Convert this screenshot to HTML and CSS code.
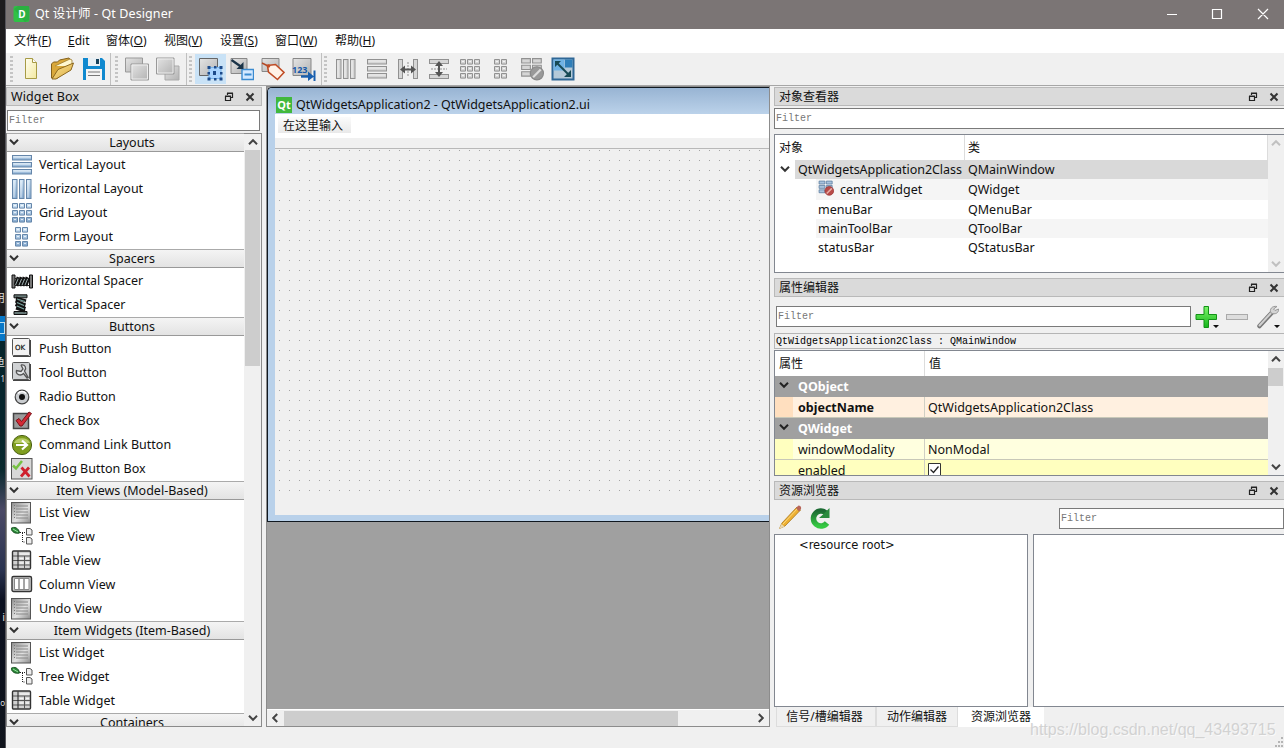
FILE: index.html
```html
<!DOCTYPE html>
<html lang="zh-CN">
<head>
<meta charset="utf-8">
<title>Qt 设计师 - Qt Designer</title>
<link rel="stylesheet" href="styles.css">
</head>
<body>
<svg class="defs" width="0" height="0">
  <defs>
    <linearGradient id="blue" x1="0" y1="0" x2="0" y2="1"><stop offset="0" stop-color="#d3e6f6"/><stop offset="1" stop-color="#87abd0"/></linearGradient>
    <linearGradient id="grey" x1="0" y1="0" x2="1" y2="1"><stop offset="0" stop-color="#e4e4e4"/><stop offset="1" stop-color="#b2b2b2"/></linearGradient>
    <linearGradient id="paper" x1="0" y1="0" x2="1" y2="1"><stop offset="0" stop-color="#fffef0"/><stop offset="1" stop-color="#f3e9a0"/></linearGradient>
    <linearGradient id="gold" x1="0" y1="0" x2="1" y2="1"><stop offset="0" stop-color="#fbe79a"/><stop offset="1" stop-color="#dba83c"/></linearGradient>
    <linearGradient id="green" x1="0" y1="0" x2="0" y2="1"><stop offset="0" stop-color="#7df56b"/><stop offset="1" stop-color="#15b51a"/></linearGradient>
    <linearGradient id="green2" x1="0" y1="0" x2="0" y2="1"><stop offset="0" stop-color="#1c6b33"/><stop offset="1" stop-color="#36c943"/></linearGradient>
    <linearGradient id="lines" x1="0" y1="0" x2="1" y2="1"><stop offset="0" stop-color="#8b8b8b"/><stop offset=".55" stop-color="#e2e2e2"/><stop offset="1" stop-color="#8b8b8b"/></linearGradient>
    <symbol id="chev" viewBox="0 0 10 8"><path d="M1 1.8 5 5.8 9 1.8" fill="none" stroke="currentColor" stroke-width="2"/></symbol>
    <symbol id="float" viewBox="0 0 10 10"><path d="M3.5 3V1.5h5v4H7M3 1h6M1.5 4.5h5v4h-5zM1 4.2h6" fill="none" stroke="#222" stroke-width="1.2"/></symbol>
    <symbol id="close" viewBox="0 0 10 10"><path d="M1.5 1.5l7 7m0-7l-7 7" stroke="#333" stroke-width="2" fill="none"/></symbol>

    <symbol id="rows" viewBox="0 0 22 22"><rect x="1.5" y="1.5" width="19" height="4.5"/><rect x="1.5" y="8.5" width="19" height="4.5"/><rect x="1.5" y="15.5" width="19" height="4.5"/><path class="shine" d="M2.500 3h17M2.500 10h17M2.500 17h17"/></symbol>
    <symbol id="cols" viewBox="0 0 22 22"><rect x="1.5" y="1.5" width="4.5" height="19"/><rect x="8.5" y="1.5" width="4.5" height="19"/><rect x="15.5" y="1.5" width="4.5" height="19"/><path class="shine" d="M3 2.500v17M10 2.500v17M17 2.500v17"/></symbol>
    <symbol id="gridi" viewBox="0 0 22 22"><path d="M1.500 1.500h5v4.600h-5zM8.500 1.500h5v4.600h-5zM15.500 1.500h5v4.600h-5zM1.500 8.500h5v4.600h-5zM8.500 8.500h5v4.600h-5zM15.500 8.500h5v4.600h-5zM1.500 15.500h5v4.600h-5zM8.500 15.500h5v4.600h-5zM15.500 15.500h5v4.600h-5z"/><path class="shine" d="M3 3.500h2M10 3.500h2M17 3.500h2M3 10.500h2M10 10.500h2M17 10.500h2M3 17.500h2M10 17.500h2M17 17.500h2"/></symbol>
    <symbol id="form" viewBox="0 0 22 22"><path d="M4.500 1.500h5v4.600h-5zM11.500 1.500h5v4.600h-5zM4.500 8.500h5v4.600h-5zM11.500 8.500h5v4.600h-5zM4.500 15.500h5v4.600h-5zM11.500 15.500h5v4.600h-5z"/><path class="shine" d="M6 3.500h2M13 3.500h2M6 10.500h2M13 10.500h2M6 17.500h2M13 17.500h2"/></symbol>

    <symbol id="list" viewBox="0 0 22 22"><rect x=".5" y=".5" width="19" height="20.500" fill="url(#lines)" stroke="#555"/><path d="M5 4h12M5 7h12M5 10h12M5 13h12M5 16h12" stroke="#888"/><path d="M3.500 3v15" stroke="#777" stroke-dasharray="1 2"/></symbol>
    <symbol id="tree" viewBox="0 0 22 22"><path d="M0 2.500C3 0 8 2 8.500 7 4 8 1 6 0 2.500z" fill="#2c8a3a" stroke="#174f20"/><path d="M2 3l5 3" stroke="#9be0a0"/><path d="M9 6.500h5M11.500 7v9h3" fill="none" stroke="#222" stroke-dasharray="1 1"/><path d="M15.500 2.500h3.500l2 1.500v5h-5.500zM15.500 11.500h3.500l2 1.500v5h-5.500z" fill="#eee" stroke="#555"/></symbol>
    <symbol id="table" viewBox="0 0 22 22"><rect x="1.500" y="1" width="18" height="18" rx="1" fill="#d0d0d0" stroke="#333" stroke-width="1.400"/><path d="M2 6h17M2 10.500h17M2 15h17M13.500 6v13" stroke="#555"/><path d="M7 1.500v17" stroke="#222"/><path d="M8.500 4h10M8.500 8.500h4M15 8.500h3M8.500 13h4M15 13h3" stroke="#f4f4f4" stroke-width="1.500"/></symbol>
    <symbol id="columns" viewBox="0 0 22 22"><rect x="1" y="2.500" width="19.500" height="15" rx="1.500" fill="#ccc" stroke="#333" stroke-width="1.400"/><path d="M3.500 4.500h4.500v11H3.500zM8 4.500h5v11H8zM13 4.500h5v11h-5z" fill="#fff" stroke="#888"/></symbol>
    <symbol id="hsp" viewBox="0 0 22 22"><path d="M1 5h3v13H1zM18.500 5h3v13h-3z" fill="#777" stroke="#111"/><path d="M4 15 7 7M6 16l4-9M9 16l4-9M12 16l4-9M15 16l3-8" stroke="#111" stroke-width="2.600"/><path d="M4.500 15 7.500 8M8 15l3-7M11 15l3-7M14 15l3-7" stroke="#9aa"/><path d="M4 8.500h14M4 15.500h14" stroke="#222" stroke-dasharray="2 1"/></symbol>
    <symbol id="vsp" viewBox="0 0 22 22"><path d="M3 .8h13v3H3zM3 17.500h13v3H3z" fill="#687a78" stroke="#111"/><path d="M5 4l10 3M4.500 7l10 4M4.500 10.500l10 4M5 14l9 3" stroke="#111" stroke-width="3"/><path d="M6 5l8 2.500M6 8.500l7 3M6 12l7 3" stroke="#7aa5a0" stroke-width="1.200"/></symbol>
    <symbol id="nolay" viewBox="0 0 22 22"><path d="M1.500 1.500h8v4h-8zM11.500 1.500h8v4h-8zM1.500 7.500h8v4h-8zM11.500 7.500h8v4h-8zM1.500 13.500h8v4h-8z"/><circle class="ban" cx="15.500" cy="15" r="6"/><path class="slash" d="M12 18.500l7-7" stroke-width="2"/></symbol>
  </defs>
</svg>

<div class="desktop">
  <span class="d1">用</span><span class="d2"></span><span class="d3">鱼</span><span class="d4">1</span><span class="d5">i</span><span class="d6">o</span>
</div>
<div class="window">
  <header class="titlebar">
    <svg width="18" height="16" viewBox="0 0 18 16"><rect x=".5" width="16" height="16" rx="2" fill="#2fc146"/><path d="M1 3l4-3h11v14l-4 2" fill="#28a03b" opacity=".5"/></svg><b class="dmark">D</b>
    <span class="title">Qt 设计师 - Qt Designer</span>
    <svg class="winbtns" width="110" height="14" viewBox="0 0 110 14" fill="none" stroke="#fff" stroke-width="1.200"><path d="M0 7.500h10M45.500 2.500h9v9h-9zM91 2l10 10m0-10l-10 10"/></svg>
  </header>

  <nav class="menubar">
    <span class="m1">文件(<u>F</u>)</span><span class="m2"><u>E</u>dit</span><span class="m3">窗体(<u>O</u>)</span><span class="m4">视图(<u>V</u>)</span><span class="m5">设置(<u>S</u>)</span><span class="m6">窗口(<u>W</u>)</span><span class="m7">帮助(<u>H</u>)</span>
  </nav>

  <div class="toolbar">
    <div class="group g1"><i class="grip"></i>
      <span class="tool"><svg viewBox="0 0 24 24"><path d="M5.500 1.500h7l4 4v16h-11z" fill="url(#paper)" stroke="#a79b45"/><path d="M12.500 1.500v4h4" fill="#fff" stroke="#a79b45"/></svg></span>
      <span class="tool"><svg viewBox="0 0 24 24"><path d="M.5 21V7l2-2h4l2-2L18 1l2 3v4L7 21z" fill="#d9a83b" stroke="#84611d"/><path d="M4 9L19 2l2 1v6" fill="#fff8d0" stroke="#9a7a30" stroke-width=".8"/><path d="M1 22L7 12.500 22.500 6 20 13 5 22z" fill="url(#gold)" stroke="#8c6820"/></svg></span>
      <span class="tool"><svg viewBox="0 0 24 24"><path d="M1 1h19l3 3v19H1z" fill="#1089cf"/><path d="M6 1h12v8H6z" fill="#e8eff4"/><path d="M14 2h3v5h-3z" fill="#17425c"/><path d="M4 12h16v11H4z" fill="#f4f4f4"/><path d="M6 15h12M6 18.500h12" stroke="#777"/></svg></span>
    </div>
    <div class="group g2"><i class="grip"></i>
      <span class="tool"><svg viewBox="0 0 24 24" fill="url(#grey)"><path d="M.5 1h17v14H.5z" stroke="#999"/><path d="M6 7h17.500v16H6z" stroke="#999"/><path d="M7 8h15.500v14H7z" fill="none" stroke="#eee"/></svg></span>
      <span class="tool"><svg viewBox="0 0 24 24" fill="url(#grey)"><path d="M9 9h14v14H9z" stroke="#aaa"/><path d="M.5 1h17.500v16H.5z" stroke="#999"/><path d="M1.500 2h15.500v14H1.500z" fill="none" stroke="#eee"/></svg></span>
    </div>
    <div class="group g3"><i class="grip"></i>
      <span class="tool active"><svg viewBox="0 0 24 24"><path d="M.5 1.500h18v17H.5z" fill="url(#grey)" stroke="#666"/><path d="M10 10.500h12v11H10z" fill="#a9d4ff" stroke="#7ab4ea"/><path d="M8.500 9h3v3h-3zM15 9h2.500v2.500H15zM20.500 9h3v3h-3zM8.500 15H11v2.500H8.500zM21 15h2.500v2.500H21zM8.500 20.500h3v3h-3zM15 21h2.500v2.500H15zM20.500 20.500h3v3h-3zM14 14h3v4h-3z" fill="#1d4b8b"/></svg></span>
      <span class="tool"><svg viewBox="0 0 24 24"><path d="M1 1.500h16v15H1z" fill="url(#grey)" stroke="#888"/><path d="M12 12.500h11.500v10H12z" fill="#d4e9ff" stroke="#3b8bd0" stroke-width="1.400"/><path d="M14.500 17.500h7" stroke="#3b8bd0" stroke-width="2"/><path d="M1.500 3l10 7" stroke="#1b3448" stroke-width="2.200"/><path d="M13.500 12V5l-7 7z" fill="#1b3448"/></svg></span>
      <span class="tool"><svg viewBox="0 0 24 24"><path d="M1 1.500h17v13H1z" fill="url(#grey)" stroke="#888"/><path d="M1 6l6 3" stroke="#b34925" stroke-width="1.500"/><path d="M6.500 8.500l8-1 8.500 8-6.500 7-9-7.500z" fill="#fff2e7" stroke="#c04c25" stroke-width="1.600"/><circle cx="7.500" cy="9" r="1.800" fill="#c04c25"/></svg></span>
      <span class="tool"><svg viewBox="0 0 24 24"><path d="M1 1.500h18v17H1z" fill="url(#grey)" stroke="#888"/><path d="M9 19.500h10" stroke="#195fae" stroke-width="2.400"/><path d="M16 14.500l6 5-6 4.500zM21.500 13.500H23.500V24h-2z" fill="#195fae"/><text x="0" y="15.500" class="num">123</text></svg></span>
    </div>
    <div class="group g4 mono"><i class="grip"></i>
      <span class="tool"><svg><use href="#cols"/></svg></span>
      <span class="tool"><svg><use href="#rows"/></svg></span>
      <span class="tool"><svg viewBox="0 0 22 22"><rect x="1.500" y="1.500" width="4" height="19"/><rect x="16.500" y="1.500" width="4" height="19"/><path d="M11 4v15" stroke-dasharray="2 1"/><path d="M3 11.500l5-4v3h6v-3l5 4-5 4v-3H8v3z" fill="#555" stroke="none"/></svg></span>
      <span class="tool"><svg viewBox="0 0 22 22"><rect x="1.500" y="1.500" width="19" height="4"/><rect x="1.500" y="16.500" width="19" height="4"/><path d="M3 11h16" stroke-dasharray="2 1"/><path d="M11 3l4 5h-3v6h3l-4 5-4-5h3V8H7z" fill="#555" stroke="none"/></svg></span>
      <span class="tool"><svg><use href="#gridi"/></svg></span>
      <span class="tool"><svg><use href="#form"/></svg></span>
      <span class="tool"><svg class="big"><use href="#nolay"/></svg></span>
      <span class="tool"><svg class="big" viewBox="0 0 24 24"><path d="M1.500 1.500h21v21h-21z" fill="#b4c9d8" stroke="#2f6796" stroke-width="2"/><path d="M2.500 2.500h11v11h-11z" fill="#6fb2e4" stroke="none"/><path d="M14 2.500h7.500v8H14z" fill="#2f7fb9" stroke="none"/><path d="M6 6l12 12" stroke="#174a55" stroke-width="2"/><path d="M4 4h6l-6 6zM20 20v-7l-7 7z" fill="#174a55" stroke="none"/></svg></span>
    </div>
  </div>

  <main class="work">
    <section class="left">
      <div class="dock"><span class="w">Widget Box</span><svg class="fl"><use href="#float"/></svg><svg class="cl"><use href="#close"/></svg></div>
      <div class="filter f1">Filter</div>
      <div class="wbox">
        <div class="wlist">
          <h3><svg><use href="#chev"/></svg>Layouts</h3>
          <p><svg class="bl"><use href="#rows"/></svg>Vertical Layout</p>
          <p><svg class="bl"><use href="#cols"/></svg>Horizontal Layout</p>
          <p><svg class="bl"><use href="#gridi"/></svg>Grid Layout</p>
          <p><svg class="bl"><use href="#form"/></svg>Form Layout</p>
          <h3><svg><use href="#chev"/></svg>Spacers</h3>
          <p><svg><use href="#hsp"/></svg>Horizontal Spacer</p>
          <p><svg><use href="#vsp"/></svg>Vertical Spacer</p>
          <h3><svg><use href="#chev"/></svg>Buttons</h3>
          <p><svg viewBox="0 0 22 22"><rect x="1.500" y=".5" width="17" height="17" rx="1" fill="#f2f2f2" stroke="#555"/><path d="M2 18.500h17.500V2" fill="none" stroke="#444"/><text x="4" y="11.500" class="ok">OK</text></svg>Push Button</p>
          <p><svg viewBox="0 0 22 22"><rect x="1.500" y=".5" width="17" height="17" rx="1" fill="#d0d2d4" stroke="#555"/><path d="M2 18.500h17.500V2" fill="none" stroke="#444"/><path d="M10 3c4-1 6 3 3.500 6l4 7M10 3l2 4-2 2.500-4.500-1c-1 4 4 6 7 3l4 5" fill="#e6e8ea" stroke="#555" stroke-width="1.300"/></svg>Tool Button</p>
          <p><svg viewBox="0 0 22 22"><circle cx="11" cy="11" r="6.800" fill="#c9cccf" stroke="#444" stroke-width="1.200"/><path d="M7 7.500a5 5 0 0 1 8 0" stroke="#fff" stroke-width="1.500" fill="none"/><circle cx="11" cy="11" r="3" fill="#111"/></svg>Radio Button</p>
          <p><svg viewBox="0 0 22 22"><path d="M2.500 3.500h15v15h-15z" fill="#9b9b9b" stroke="#444" stroke-width="1.500"/><path d="M5 10.500l3-2 2.500 3L18 2l2.500 1.500L11 16H9z" fill="#d32a35" stroke="#7c1118"/></svg>Check Box</p>
          <p><svg viewBox="0 0 22 22"><circle cx="11" cy="11" r="9.600" fill="#7f9e1f" stroke="#4a5f12"/><path d="M3 9a8.500 7 0 0 1 16 0z" fill="#b7cc67"/><path d="M5 11h10M11 6.500l5 4.500-5 4.500" fill="none" stroke="#fff" stroke-width="2.200"/></svg>Command Link Button</p>
          <p><svg viewBox="0 0 22 22"><rect x=".5" y=".5" width="20.500" height="20.500" fill="#d8d8d8" stroke="#555"/><path d="M2 7.500l3 3L11 3" fill="none" stroke="#76c043" stroke-width="2.500"/><path d="M10.500 9.500l8 9M18 9.500l-8 9" stroke="#cf1f2d" stroke-width="2.700"/></svg>Dialog Button Box</p>
          <h3><svg><use href="#chev"/></svg>Item Views (Model-Based)</h3>
          <p><svg><use href="#list"/></svg>List View</p>
          <p><svg><use href="#tree"/></svg>Tree View</p>
          <p><svg><use href="#table"/></svg>Table View</p>
          <p><svg><use href="#columns"/></svg>Column View</p>
          <p><svg><use href="#list"/></svg>Undo View</p>
          <h3><svg><use href="#chev"/></svg>Item Widgets (Item-Based)</h3>
          <p><svg><use href="#list"/></svg>List Widget</p>
          <p><svg><use href="#tree"/></svg>Tree Widget</p>
          <p><svg><use href="#table"/></svg>Table Widget</p>
          <h3><svg><use href="#chev"/></svg>Containers</h3>
        </div>
        <div class="vscroll"><svg class="up"><use href="#chev"/></svg><i class="thumb t1"></i><svg class="down"><use href="#chev"/></svg></div>
      </div>
    </section>

    <section class="mdi">
      <div class="sub">
        <div class="subtitle"><span class="qt">Qt</span>QtWidgetsApplication2 - QtWidgetsApplication2.ui</div>
        <div class="client">
          <div class="submenu"><span>在这里输入</span></div>
          <div class="subtool"></div>
          <div class="canvas"></div>
        </div>
      </div>
      <div class="hscroll"><svg class="lf"><use href="#chev"/></svg><i></i><svg class="rt"><use href="#chev"/></svg></div>
    </section>

    <section class="right">
      <div class="dock"><span>对象查看器</span><svg class="fl"><use href="#float"/></svg><svg class="cl"><use href="#close"/></svg></div>
      <div class="filter f2">Filter</div>
      <div class="objbox">
        <div class="tree">
          <div class="thead"><span>对象</span><span>类</span></div>
          <div class="trow sel"><svg class="ex"><use href="#chev"/></svg><span class="fill n0">QtWidgetsApplication2Class</span><span class="val">QMainWindow</span></div>
          <div class="trow alt r1"><span class="fill n1"><svg class="cw"><use href="#nolay"/></svg><span>centralWidget</span></span><span class="val">QWidget</span></div>
          <div class="trow"><span class="fill n1">menuBar</span><span class="val">QMenuBar</span></div>
          <div class="trow alt"><span class="fill n1">mainToolBar</span><span class="val">QToolBar</span></div>
          <div class="trow"><span class="fill n1">statusBar</span><span class="val">QStatusBar</span></div>
        </div>
        <div class="vscroll dim"><svg class="up"><use href="#chev"/></svg><svg class="down"><use href="#chev"/></svg></div>
      </div>

      <div class="dock k2"><span>属性编辑器</span><svg class="fl"><use href="#float"/></svg><svg class="cl"><use href="#close"/></svg></div>
      <div class="proptools">
        <div class="filter f3">Filter</div>
        <svg width="90" height="26" viewBox="0 0 90 26"><path d="M11 3.500h4.500v8h8v5h-8v8H11v-8H3v-5h8v-8z" fill="url(#green)" stroke="#139217"/><path d="M20 22h6l-3 3zM81 22h6l-3 3z" fill="#111"/><rect x="33.500" y="11.500" width="21" height="5" fill="#ddd" stroke="#aaa"/><path d="M66.500 23L79 9.500" stroke="#777" stroke-width="4.500" stroke-linecap="round"/><path d="M66.500 22.500L79 9" stroke="#d0d0d0" stroke-width="2" stroke-linecap="round"/><path d="M84 3.500c-5-1-8 3-6 6.500 4 2 8 0 7.500-4L82 7.500 80.500 6z" fill="#d4d4d4" stroke="#999"/></svg>
      </div>
      <div class="objlabel">QtWidgetsApplication2Class : QMainWindow</div>
      <div class="propbox">
        <div class="props">
          <div class="phead"><span>属性</span><span>值</span></div>
          <div class="pgroup"><svg><use href="#chev"/></svg>QObject</div>
          <div class="prow peach"><i></i><b>objectName</b><span>QtWidgetsApplication2Class</span></div>
          <div class="pgroup"><svg><use href="#chev"/></svg>QWidget</div>
          <div class="prow yel"><i></i><em>windowModality</em><span>NonModal</span></div>
          <div class="prow yel2"><i></i><em>enabled</em><span><svg class="chk" viewBox="0 0 13 13"><path d="M.5.5h12v12H.5z" fill="#fff" stroke="#333"/><path d="M2.500 6.500l3 3 5-6" fill="none" stroke="#222" stroke-width="1.300"/></svg></span></div>
        </div>
        <div class="vscroll"><svg class="up"><use href="#chev"/></svg><i class="thumb t2"></i><svg class="down"><use href="#chev"/></svg></div>
      </div>

      <div class="dock k3"><span>资源浏览器</span><svg class="fl"><use href="#float"/></svg><svg class="cl"><use href="#close"/></svg></div>
      <div class="restools">
        <svg width="60" height="26" viewBox="0 0 60 26"><path d="M1.500 24.500L4 19 19 3l3.500 3L7 22z" fill="#eeb032" stroke="#a8761c" stroke-width=".8"/><path d="M5 20L20 4" stroke="#f9d982"/><path d="M18 4l2.500-2.500c2 0 3 1.500 2.500 3.500L21 7.500z" fill="#b8655a"/><path d="M1 25l2.500-5 3 2.500z" fill="#e9d8b0"/><path d="M49 19a7.500 7.500 0 1 1-1-10" fill="none" stroke="url(#green2)" stroke-width="5.500"/><path d="M51.500 4v10H41l4-3.500z" fill="#2a8b3d"/></svg>
        <div class="filter f4">Filter</div>
      </div>
      <div class="panes"><div class="pane pa">&lt;resource root&gt;</div><div class="pane pb"></div></div>
      <div class="tabs"><span class="tb1">信号/槽编辑器</span><span class="tb2">动作编辑器</span><span class="tb3">资源浏览器</span></div>
    </section>
  </main>
  <footer class="status"><svg width="11" height="11" viewBox="0 0 11 11" fill="#b5b5b5"><path d="M8 0h2v2H8zM5 4h2v2H5zM8 4h2v2H8zM2 8h2v2H2zM5 8h2v2H5zM8 8h2v2H8z"/></svg></footer>
</div>
<div class="watermark">https://blog.csdn.net/qq_43493715</div>
</body>
</html>
```
FILE: styles.css
```css
* { box-sizing: border-box; }
body {
  margin: 0; width: 1284px; height: 748px; overflow: hidden; display: flex;
  background: #f0f0f0; color: #111;
  font: 12.5px/20px "Noto Sans", "Noto Sans CJK SC", sans-serif;
}
svg { display: block; flex: none; }
.defs { position: absolute; }
h3, p { margin: 0; font-weight: normal; }
b, em, i { font-style: normal; }

/* sliver of the desktop left of the window */
.desktop {
  position: relative; width: 6px; height: 748px; overflow: hidden; flex: none;
  background: linear-gradient(#1d1c1e 0 316px, #0878c8 316px 341px, #06252c 341px 420px, #0a2a2e 470px, #4b4a66 510px, #2a3350 570px, #0b1020 600px, #10141c);
  border-right: 1px solid #55545a; color: #ddd; font-size: 11px; line-height: 12px;
}
.desktop span { position: absolute; right: 0; }
.d1 { top: 292px; } .d2 { top: 322px; width: 5px; height: 12px; border: 1px solid #bde; border-left: 0; }
.d3 { top: 356px; } .desktop .d4 { top: 373px; font-size: 8px; } .d5 { top: 611px; } .desktop .d6 { top: 697px; font-size: 8px; }

.window { width: 1278px; display: flex; flex-direction: column; }
.titlebar { height: 29px; flex: none; background: #7b7575; color: #fff; display: flex; align-items: center; padding: 0 7px 2px 7px; }
.dmark { width: 18px; margin-left: -18px; text-align: center; font-size: 10px; }
.title { margin-left: 4px; flex: 1; font-size: 12.5px; letter-spacing: .1px; }
.menubar { height: 24px; flex: none; background: #fff; display: flex; padding: 2px 0 0 8px; font-size: 12px; white-space: nowrap; }
.m1 { width: 54px; } .m2 { width: 38px; } .m3 { width: 58px; } .m4 { width: 56px; } .m5 { width: 55px; } .m6 { width: 60px; }

.toolbar { height: 33px; flex: none; display: flex; border-bottom: 1px solid #a6a6a6; }
.group { display: flex; align-items: center; border-right: 1px solid #c0c0c0; }
.g1 { width: 105px; } .g2 { width: 76px; } .g3 { width: 135px; } .g4 { border: 0; }
.grip { width: 3px; height: 27px; margin: 0 3px 0 4px; background: repeating-linear-gradient(#c4c4c4 0 2px, transparent 2px 4px); flex: none; }
.g3 .grip { margin: 0 3px 0 2px; } .g4 .grip { margin: 0 3px 0 2px; }
.tool { width: 31px; height: 30px; display: flex; align-items: center; justify-content: center; flex: none; }
.tool svg { width: 24px; height: 24px; }
.active { background: #c9e2f6; }
.mono svg { width: 22px; height: 22px; fill: #d6d6d6; stroke: #919191; }
.mono svg.big { width: 24px; height: 24px; }
.num { font: bold 9px "Noto Sans", sans-serif; fill: #1759a8; }
.shine { stroke: #fff; stroke-opacity: .7; }
.ban { fill: var(--ban, #999); stroke: var(--edge, #888); }
.slash { stroke: var(--slash, #ddd); }

.work { height: 641px; flex: none; display: flex; }
.left { width: 256px; flex: none; display: flex; flex-direction: column; padding-top: 1px; }
.dock { height: 19px; flex: none; border: 1px solid #b9b9b9; background: #dadada; display: flex; align-items: center; padding-left: 4px; }
.dock span { flex: 1; font-size: 12px; padding-top: 1px; }
.dock .w { font-size: 12.5px; letter-spacing: .1px; }
.dock svg { width: 10px; height: 10px; }
.dock .fl { margin-right: 11px; } .dock .cl { margin-right: 6px; }
.filter { height: 21px; flex: none; border: 1px solid #7a7a7a; background: #fff; color: #777; padding-left: 1px; font: 10px/20px "Liberation Mono", monospace; }
.f1 { margin: 4px 2px 2px 1px; }
.wbox { flex: 1; min-height: 0; border: 1px solid #8a8a8a; display: flex; background: #fff; }
.wlist { width: 237px; overflow: hidden; margin-top: -1px; }
.wlist h3 { position: relative; height: 19px; margin-bottom: 1px; padding-left: 13px; font-size: 12.5px; line-height: 18px; text-align: center; background: linear-gradient(#f4f4f4, #e3e3e3); border-top: 1px solid #aaa; border-bottom: 1px solid #999; }
.wlist h3 svg { position: absolute; left: 2px; top: 4px; width: 10px; height: 8px; color: #333; }
.wlist p { height: 24px; line-height: 24px; display: flex; align-items: center; padding-left: 4px; gap: 6px; }
.wlist p svg { width: 22px; height: 22px; }
.bl { fill: url(#blue); stroke: #6586aa; }
.ok { font: 7px "DejaVu Sans", sans-serif; fill: #111; stroke: #111; stroke-width: .2; }

.vscroll { width: 16px; background: #f0f0f0; display: flex; flex-direction: column; color: #444; flex: none; }
.wbox .vscroll { width: 17px; padding-left: 1px; }
.vscroll svg { width: 10px; height: 8px; margin: 4px auto; }
.vscroll .up { transform: scaleY(-1); }
.vscroll .down { margin-top: auto; }
.thumb { background: #cdcdcd; width: 15px; }
.t1 { height: 216px; } .t2 { height: 18px; margin-top: 1px; }
.dim { color: #c0c0c0; }

.mdi { width: 504px; margin-left: 4px; flex: none; background: #a0a0a0; border: 1px solid #8c8c8c; display: flex; flex-direction: column; }
.sub { height: 435px; flex: none; border: 1px solid #101820; border-right: 0; border-top-left-radius: 5px; background: #b9d1ea; display: flex; flex-direction: column; overflow: hidden; }
.subtitle { height: 26px; flex: none; background: linear-gradient(#98b4d3, #bbd2ea); display: flex; align-items: center; gap: 4px; padding: 8px 0 0 8px; font-size: 12.5px; letter-spacing: -.02px; }
.qt { width: 16px; height: 16px; background: #41b83d; color: #fff; font: bold 11px/15px "Noto Sans", sans-serif; text-align: center; }
.client { margin: 0 0 6px 7px; flex: 1; background: #f0f0f0; display: flex; flex-direction: column; }
.submenu { height: 24px; background: #fff; padding: 3px 0 0 3px; font-size: 12px; }
.submenu span { display: block; width: 73px; height: 16px; line-height: 18px; padding-left: 5px; background: linear-gradient(#fbfbfb, #e9e9e9); }
.subtool { height: 11px; border-bottom: 1px solid #b8b8b8; }
.canvas { height: 345px; background: radial-gradient(circle at .5px .5px, #a5a5a5 .7px, transparent .8px) 4px 1px / 10px 10px; }
.hscroll { margin-top: auto; height: 17px; background: #f0f0f0; border-top: 1px solid #fff; display: flex; align-items: center; color: #444; }
.hscroll i { width: 394px; height: 15px; background: #cdcdcd; }
.hscroll svg { width: 10px; height: 8px; }
.lf { transform: rotate(90deg); margin: 0 4px 0 3px; } .rt { transform: rotate(-90deg); margin: 0 3px 0 auto; }

.right { width: 510px; margin-left: 4px; flex: none; display: flex; flex-direction: column; padding-top: 1px; }
.right .dock { border-right: 0; }
.right .dock .cl { margin-right: 5px; }
.f2 { margin-top: 2px; border-right: 0; }
.objbox { height: 139px; margin-top: 5px; flex: none; display: flex; border: 1px solid #828790; border-right: 0; background: #fff; }
.tree { width: 493px; }
.thead { height: 25px; display: flex; line-height: 26px; font-size: 12px; }
.thead span:first-child { width: 190px; padding-left: 4px; border-right: 1px solid #dcdcdc; }
.thead span:last-child { flex: 1; padding-left: 3px; border-right: 1px solid #dcdcdc; }
.trow { height: 19px; display: flex; line-height: 19px; font-size: 12.5px; }
.ex { width: 10px; height: 8px; margin: 5px 0 0 5px; color: #333; }
.fill { display: flex; height: 100%; white-space: nowrap; }
.n0 { width: 169px; margin-left: 5px; padding-left: 3px; letter-spacing: -.05px; }
.n1 { width: 148px; margin-left: 41px; padding-left: 2px; }
.val { flex: 1; padding-left: 4px; }
.sel .fill, .sel .val { background: #d9d9d9; }
.alt .fill, .alt .val { background: #f5f5f5; }
.r1 { height: 21px; line-height: 21px; }
.cw { width: 16px; height: 16px; margin: 1px 6px 0 0; fill: #a9c3dd; stroke: #54779c; --ban: #b84a48; --edge: #933; --slash: #e8b0a8; }

.k2 { margin-top: 5px; }
.proptools { display: flex; height: 36px; flex: none; padding: 9px 0 0 2px; }
.f3 { width: 415px; }
.proptools svg { margin-top: -3px; margin-left: 2px; }
.objlabel { height: 16px; flex: none; border: 1px solid #b5b5b5; border-right: 0; padding-left: 1px; color: #000; font: 10px/15px "Liberation Mono", monospace; }
.propbox { height: 126px; margin-top: 1px; flex: none; border: 1px solid #828790; border-right: 0; display: flex; overflow: hidden; background: #fff; }
.props { width: 493px; overflow: hidden; }
.phead { height: 25px; display: flex; line-height: 25px; font-size: 12px; }
.phead span:first-child { width: 150px; padding-left: 4px; border-right: 1px solid #dcdcdc; }
.phead span:last-child { padding-left: 4px; }
.pgroup { height: 21px; background: #a0a0a0; color: #fff; font-weight: bold; display: flex; line-height: 21px; }
.pgroup svg { width: 10px; height: 8px; margin: 5px 9px 0 4px; color: #222; }
.prow { height: 21px; display: flex; line-height: 21px; border-bottom: 1px solid #c8c8b8; }
.prow i { width: 18px; } .prow b, .prow em { width: 132px; padding-left: 5px; border-right: 1px solid #d0cfc4; }
.prow span { padding-left: 3px; }
.peach { background: #fff0e0; } .peach i { background: #ffdfbf; }
.yel { background: #ffffdf; } .yel i { background: #ffffbf; } .yel2 { background: #ffffbf; }
.chk { width: 13px; height: 13px; margin-top: 3px; }

.k3 { margin-top: 5px; }
.restools { height: 34px; flex: none; display: flex; justify-content: space-between; }
.restools svg { margin: 4px 0 0 4px; }
.f4 { width: 225px; margin-top: 8px; }
.panes { height: 173px; flex: none; display: flex; gap: 5px; }
.pane { background: #fff; border: 1px solid #828790; }
.pa { width: 254px; padding-left: 24px; font: 11.5px/20px "DejaVu Sans", "Noto Sans", sans-serif; }
.pb { flex: 1; border-right: 0; }
.tabs { display: flex; height: 20px; padding-left: 2px; font-size: 12px; line-height: 19px; text-align: center; }
.tabs span { border: 1px solid #ddd; border-top: 0; }
.tb1 { width: 100px; padding-right: 3px; } .tb2 { width: 82px; } .tabs .tb3 { width: 86px; background: #fff; border-color: #fff; line-height: 20px; }
.status { flex: 1; display: flex; justify-content: flex-end; align-items: flex-end; }
.watermark { position: absolute; left: 1030px; top: 720px; font: 16px/20px "Liberation Sans", sans-serif; color: #d2d2d2; text-shadow: 1px 1px #fafafa; }
```
